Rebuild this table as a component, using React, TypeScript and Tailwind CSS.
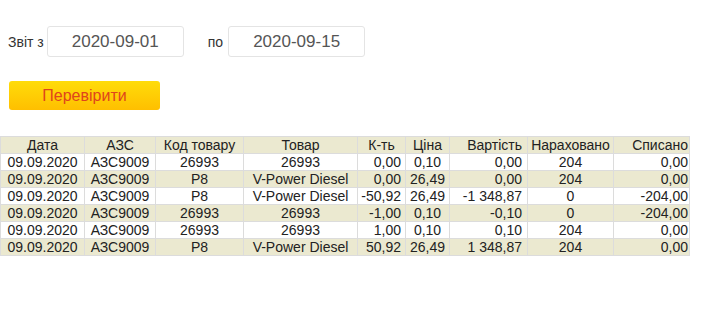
import React from 'react';

const rows = [
  ['09.09.2020', 'АЗС9009', '26993', '26993', '0,00', '0,10', '0,00', '204', '0,00'],
  ['09.09.2020', 'АЗС9009', 'P8', 'V-Power Diesel', '0,00', '26,49', '0,00', '204', '0,00'],
  ['09.09.2020', 'АЗС9009', 'P8', 'V-Power Diesel', '-50,92', '26,49', '-1 348,87', '0', '-204,00'],
  ['09.09.2020', 'АЗС9009', '26993', '26993', '-1,00', '0,10', '-0,10', '0', '-204,00'],
  ['09.09.2020', 'АЗС9009', '26993', '26993', '1,00', '0,10', '0,10', '204', '0,00'],
  ['09.09.2020', 'АЗС9009', 'P8', 'V-Power Diesel', '50,92', '26,49', '1 348,87', '204', '0,00'],
];

// column widths / alignment read off the screenshot
const cols = [
  { title: 'Дата', w: 'w-[84px]', align: 'text-center px-[2px]', head: 'text-center px-[2px]' },
  { title: 'АЗС', w: 'w-[71px]', align: 'text-center px-[2px]', head: 'text-center px-[2px]' },
  { title: 'Код товару', w: 'w-[88px]', align: 'text-center px-[2px]', head: 'text-center px-[2px]' },
  { title: 'Товар', w: 'w-[114px]', align: 'text-center px-[2px]', head: 'text-center px-[2px]' },
  { title: 'К-ть', w: 'w-[48px]', align: 'text-right pl-[2px] pr-[4px]', head: 'text-center px-[2px]' },
  { title: 'Ціна', w: 'w-[44px]', align: 'text-center px-[2px]', head: 'text-center px-[2px]' },
  { title: 'Вартість', w: 'w-[78px]', align: 'text-right pl-[2px] pr-[5px]', head: 'text-right pl-[2px] pr-[5px]' },
  { title: 'Нараховано', w: 'w-[86px]', align: 'text-center px-[2px]', head: 'text-center px-[2px]' },
  { title: 'Списано', w: 'w-[76px]', align: 'text-right pl-[2px] pr-[1px]', head: 'text-right pl-[2px] pr-[1px]' },
];

const DateInput = ({ value }: { value: string }) => (
  <div className="w-[137px] h-[31px] border border-[#e4e4e4] rounded-[3px] flex items-center justify-center text-[17px] text-[#555]">
    {value}
  </div>
);

export default function App() {
  return (
    <div className="w-[713px] h-[316px] bg-white font-['Liberation_Sans',Arial,sans-serif] text-[#222]">
      <div className="flex items-center pt-[26px] pl-[8px] h-[57px]">
        <span className="text-[14px] text-[#333] mr-[3px] mt-[2px]">Звіт з</span>
        <DateInput value="2020-09-01" />
        <span className="text-[14px] text-[#333] ml-[24px] mr-[5px] mt-[2px]">по</span>
        <DateInput value="2020-09-15" />
      </div>
      <div className="pl-[9px] pt-[24px]">
        <button className="w-[151px] h-[29px] rounded-[3px] bg-gradient-to-b from-[#ffdc0a] to-[#ffbf00] text-[#e0441c] text-[16px] leading-[29px]">
          Перевірити
        </button>
      </div>
      <table className="mt-[26px] border-collapse table-fixed w-[689px] text-[14px] leading-[16px] text-[#222]">
        <thead>
          <tr className="bg-[#ebe9d0]">
            {cols.map((c, i) => (
              <th
                key={i}
                className={`${c.w} ${c.head} font-normal h-[17px] border border-[#dcdcdc] whitespace-nowrap`}
              >
                {c.title}
              </th>
            ))}
          </tr>
        </thead>
        <tbody>
          {rows.map((r, ri) => (
            <tr key={ri} className={ri % 2 === 1 ? 'bg-[#ebe9d0]' : 'bg-white'}>
              {r.map((v, ci) => (
                <td
                  key={ci}
                  className={`${cols[ci].align} h-[17px] border border-[#dcdcdc] whitespace-nowrap`}
                >
                  {v}
                </td>
              ))}
            </tr>
          ))}
        </tbody>
      </table>
    </div>
  );
}
